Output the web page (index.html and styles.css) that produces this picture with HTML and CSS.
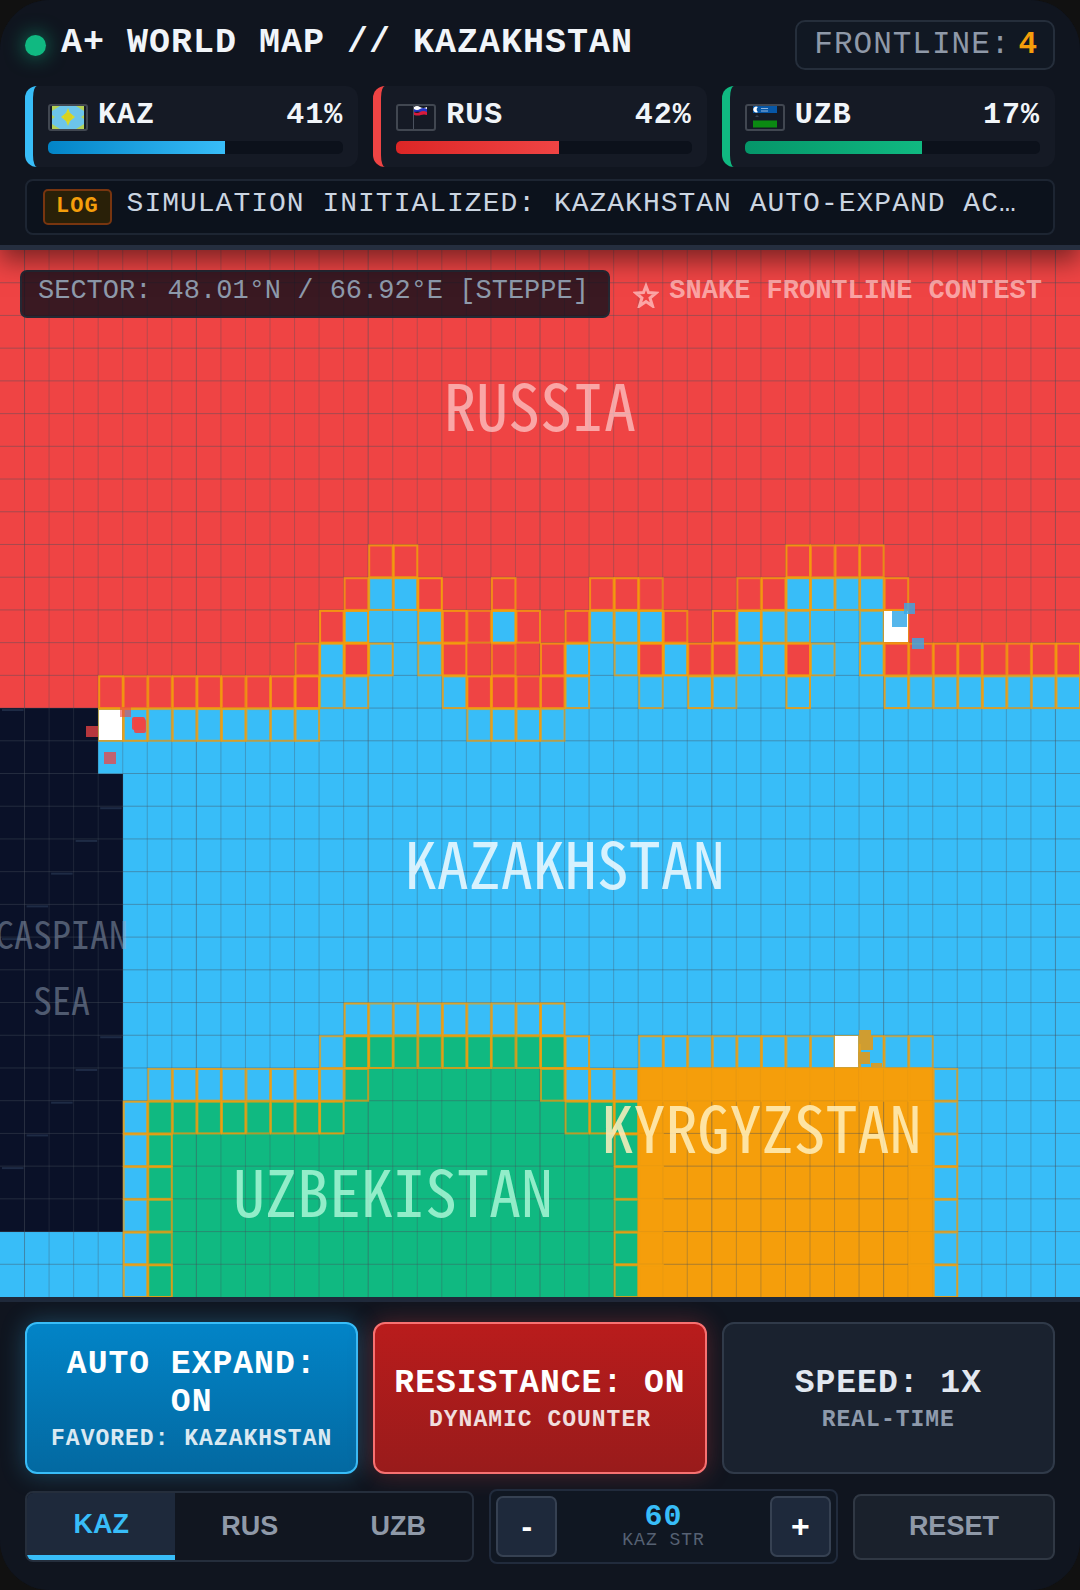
FILE: index.html
```html
<!DOCTYPE html>
<html lang="en">
<head>
<meta charset="utf-8">
<meta name="viewport" content="width=device-width, initial-scale=1">
<title>A+ World Map // Kazakhstan</title>
<link rel="stylesheet" href="styles.css">
</head>
<body>
<div class="app">
  <header class="header">
    <div class="title-row">
      <h1 class="title"><span class="status-dot"></span>A+ WORLD MAP // KAZAKHSTAN</h1>
      <div class="frontline">FRONTLINE:<b class="frontline-count">4</b></div>
    </div>
    <div class="stats">
      <section class="stat kaz">
        <div class="stat-head">
          <svg class="flag" viewBox="0 0 36 23" aria-hidden="true"><rect x="2" width="32" height="23" fill="#6cc5ea"/><path d="M18 2l2 5 5 4-5 4-2 5-2-5-5-4 5-4z" fill="#d6d82a"/><circle cx="18" cy="11" r="4" fill="#d9d21f"/><path d="M2 0h8l-8 5zM34 0h-8l8 5zM2 23h8l-8-5zM34 23h-8l8-5zM2 9l3 2-3 2zM34 9l-3 2 3 2z" fill="#b4d156"/></svg>
          <span>KAZ</span><span class="share">41%</span>
        </div>
        <div class="track"><div class="fill" style="width:60%"></div></div>
      </section>
      <section class="stat rus">
        <div class="stat-head">
          <svg class="flag" viewBox="0 0 36 23" aria-hidden="true"><path d="M15.500 0v23" stroke="#4a515e"/><path d="M16 1q3-2 6 0t7 0v3H16z" fill="#fff"/><path d="M16 3q3 2 6 0t7 0v3q-3 1-6 0t-7 0z" fill="#2336c4"/><path d="M16 6q3 2 6 0t7 0v3q-3-1-6 0t-7 0z" fill="#d81b3c"/></svg>
          <span>RUS</span><span class="share">42%</span>
        </div>
        <div class="track"><div class="fill" style="width:55%"></div></div>
      </section>
      <section class="stat uzb">
        <div class="stat-head">
          <svg class="flag" viewBox="0 0 36 23" aria-hidden="true"><path d="M6 0h24v7H6z" fill="#0757a6"/><path d="M11 1a3 3 0 1 0 0 5a3 3 0 0 1 0-5z" fill="#fff"/><path d="M14 2.500h7M14 5h7" stroke="#8fb4dc"/><path d="M8 11l2-2 2 2z" fill="#374151"/><path d="M6 14.500h24v7H6z" fill="#0b8a12"/></svg>
          <span>UZB</span><span class="share">17%</span>
        </div>
        <div class="track"><div class="fill" style="width:60%"></div></div>
      </section>
    </div>
    <div class="log">
      <span class="log-tag">LOG</span>
      <span class="log-text">SIMULATION INITIALIZED: KAZAKHSTAN AUTO-EXPAND ACTIVE ON ALL FRONTS</span>
    </div>
  </header>

  <main class="map">
    <svg class="terrain" viewBox="0 0 1080 1047" preserveAspectRatio="none" aria-hidden="true">
      <g id="cells" shape-rendering="crispEdges"></g>
      <g id="grid" class="grid"></g>
      <g id="waves" class="waves"></g>
      <g id="frontier" class="frontier"></g>
      <g class="heads">
        <rect x="99" y="460" width="23" height="30"/>
        <rect x="884" y="361" width="24" height="31"/>
        <rect x="835" y="786" width="23" height="31"/>
      </g>
      <g fill="#ef4444">
        <rect x="86" y="476" width="12" height="11" opacity=".75"/>
        <rect x="120" y="457" width="11" height="10" opacity=".6"/>
        <rect x="132" y="467" width="13" height="13" rx="2" opacity=".95"/>
        <rect x="134" y="469" width="12" height="14" rx="2" opacity=".9"/>
        <rect x="104" y="502" width="12" height="12" opacity=".75"/>
      </g>
      <g fill="#38a9e8">
        <rect x="904" y="353" width="11" height="11" opacity=".8"/>
        <rect x="892" y="361" width="15" height="16" opacity=".85"/>
        <rect x="912" y="388" width="12" height="11" opacity=".8"/>
      </g>
      <g fill="#cf9d31">
        <rect x="859" y="780" width="12" height="14"/>
        <rect x="861" y="786" width="12" height="14"/>
        <rect x="858" y="802" width="12" height="12"/>
        <rect x="871" y="813" width="11" height="5"/>
      </g>
    </svg>
    <span class="place russia">RUSSIA</span>
    <span class="place kazakhstan">KAZAKHSTAN</span>
    <span class="place kyrgyzstan">KYRGYZSTAN</span>
    <span class="place uzbekistan">UZBEKISTAN</span>
    <span class="place caspian">CASPIAN<br>SEA</span>
    <div class="hud">
      <div class="sector">SECTOR: 48.01°N / 66.92°E [STEPPE]</div>
      <div class="contest">
        <svg class="star" viewBox="0 0 26 26" aria-hidden="true"><path d="M13 4l2.500 6.500 7.500.5-6 5 2.500 8-6.500-4.500L6.500 24 9 16l-6-5 7.500-.5z" fill="none" stroke="currentColor" stroke-width="3"/></svg>
        SNAKE FRONTLINE CONTEST
      </div>
    </div>
  </main>

  <footer class="controls">
    <div class="actions">
      <button class="action expand" type="button">AUTO EXPAND: ON<small>FAVORED: KAZAKHSTAN</small></button>
      <button class="action resist" type="button">RESISTANCE: ON<small>DYNAMIC COUNTER</small></button>
      <button class="action speed" type="button">SPEED: 1X<small>REAL-TIME</small></button>
    </div>
    <div class="tools">
      <div class="tabs">
        <button class="tab active" type="button">KAZ</button>
        <button class="tab" type="button">RUS</button>
        <button class="tab" type="button">UZB</button>
      </div>
      <div class="stepper">
        <button class="step" type="button">-</button>
        <div class="strength"><b>60</b><span>KAZ STR</span></div>
        <button class="step" type="button">+</button>
      </div>
      <button class="reset" type="button">RESET</button>
    </div>
  </footer>
</div>
<script src="map.js"></script>
</body>
</html>
```
FILE: map.js
```js
// Territory runs per row: owner letter followed by the number of columns.
// R Russia, K Kazakhstan, U Uzbekistan, G Kyrgyzstan, W water
const rows = [];
const add = (count, runs) => {
  const line = runs.replace(/([A-Z])(\d+) ?/g, (_, owner, n) => owner.repeat(Number(n)));
  for (let i = 0; i < count; i++) rows.push(line);
};
add(10, 'R44');
add(1, 'R15 K2 R15 K4 R8');
add(1, 'R14 K4 R2 K1 R3 K3 R3 K6 R8');
add(1, 'R13 K1 R1 K3 R5 K3 R1 K1 R2 K2 R1 K3 R8');
add(1, 'R13 K6 R4 K21');
add(2, 'W4 K40');
add(8, 'W5 K39');
add(1, 'W5 K9 U9 K21');
add(1, 'W5 K9 U9 K3 G12 K6');
add(4, 'W5 K1 U20 G12 K6');
add(2, 'K6 U20 G12 K6');

const colors = { R: '#ef4444', K: '#38bdf8', U: '#10b981', G: '#f59e0b', W: '#0a1128' };
const COLS = 44, ROWS = rows.length;
const cw = 1080 / COLS, ch = 1047 / ROWS;
const make = (parent, tag, attrs) => {
  const el = document.createElementNS('http://www.w3.org/2000/svg', tag);
  for (const key in attrs) el.setAttribute(key, attrs[key]);
  document.getElementById(parent).appendChild(el);
};

rows.forEach((line, r) => {
  for (const run of line.matchAll(/(.)\1*/g)) {
    make('cells', 'rect', { x: run.index * cw, y: r * ch, width: run[0].length * cw, height: ch, fill: colors[run[1]] });
  }
  for (let c = 0; c < COLS; c++) {
    const owner = line[c];
    if (owner === 'W') {
      if ((c + r) % 7 === 0) make('waves', 'rect', { x: c * cw + 2, y: r * ch + 1, width: cw - 3, height: 2 });
      continue;
    }
    const near = [line[c - 1], line[c + 1], rows[r - 1]?.[c], rows[r + 1]?.[c]];
    const contested = near.filter(o => o && o !== 'W' && o !== owner).length;
    if (contested) {
      make('frontier', 'rect', { x: c * cw + 1, y: r * ch + 1, width: cw - 1, height: ch - 1, opacity: Math.min(0.55 + contested * 0.1 + ((c * 5 + r * 3) % 4) * 0.07, 1) });
    }
  }
});
for (let c = 1; c < COLS; c++) make('grid', 'path', { d: `M${c * cw} 0V1047`, opacity: c % 7 === 1 ? 1 : 0.65 });
for (let r = 1; r < ROWS; r++) make('grid', 'path', { d: `M0 ${r * ch}H1080`, opacity: 0.85 });
```
FILE: styles.css
```css
* { box-sizing: border-box; }

body {
  margin: 0;
  background: #111;
  color: #f1f5f9;
  font-family: "Liberation Mono", monospace;
}

button { font: inherit; color: inherit; margin: 0; padding: 0; cursor: pointer; }

.app {
  display: flex;
  flex-direction: column;
  min-height: 100vh;
  overflow: hidden;
  border-radius: 50px;
  background: #10151f;
}

.header {
  position: relative;
  z-index: 1;
  display: flex;
  flex-direction: column;
  padding: 20px 25px 10px;
  border-bottom: 5px solid #252e3f;
  background: #10151f;
  box-shadow: 0 10px 25px rgba(0, 0, 0, .5);
}

.title-row { display: flex; justify-content: space-between; margin-bottom: 16px; }

.title {
  display: flex;
  align-items: center;
  gap: 15px;
  height: 46px;
  margin: 0;
  font-size: 35px;
  letter-spacing: 1px;
}

.status-dot {
  width: 21px;
  height: 21px;
  margin-top: 4px;
  border-radius: 50%;
  background: #10b981;
  box-shadow: 0 0 20px rgba(16, 185, 129, .7);
}

.frontline {
  height: 50px;
  padding: 0 15px 0 17px;
  border: 2px solid #252e3b;
  border-radius: 10px;
  background: #111823;
  color: #8f99a8;
  font-size: 31px;
  line-height: 46px;
  letter-spacing: 1px;
}

.frontline-count { margin-left: 8px; color: #f59e0b; }

.stats { display: grid; grid-template-columns: repeat(3, 1fr); gap: 15px; margin-bottom: 12px; }

.stat {
  height: 81px;
  padding: 12px 15px;
  border-left: 8px solid var(--main);
  border-radius: 12px;
  background: #151a25;
}

.kaz { --main: #38bdf8; --deep: #0284c7; }
.rus { --main: #ef4444; --deep: #dc2626; }
.uzb { --main: #10b981; --deep: #059669; }

.stat-head {
  display: flex;
  align-items: center;
  gap: 10px;
  height: 34px;
  margin-bottom: 9px;
  font-size: 30px;
  font-weight: bold;
  line-height: 34px;
  letter-spacing: 1px;
}

.share { margin-left: auto; }

.flag {
  width: 40px;
  height: 27px;
  margin-top: 4px;
  border: 2px solid #414751;
  border-radius: 3px;
}

.track { height: 13px; overflow: hidden; border-radius: 5px; background: #0c111b; }
.fill { height: 100%; background: linear-gradient(90deg, var(--deep), var(--main)); }

.log {
  display: flex;
  align-items: center;
  gap: 15px;
  height: 56px;
  padding: 0 27px 0 16px;
  border: 2px solid #1d2532;
  border-radius: 8px;
  background: #0c121c;
}

.log-tag {
  padding: 0 11px;
  border: 2px solid #78350f;
  border-radius: 5px;
  background: #292008;
  color: #f59e0b;
  font-size: 22px;
  font-weight: bold;
  line-height: 32px;
  letter-spacing: 1px;
}

.log-text {
  overflow: hidden;
  height: 40px;
  color: #cbd5e1;
  font-size: 28px;
  line-height: 34px;
  letter-spacing: 1px;
  text-overflow: ellipsis;
  white-space: nowrap;
}

.map { position: relative; flex: 1; min-height: 600px; overflow: hidden; }
.terrain { position: absolute; inset: 0; width: 100%; height: 100%; }
.grid { fill: none; stroke: #47505c; stroke-opacity: .5; stroke-width: 1; }
.waves { fill: #1e2b45; }
.frontier { fill: none; stroke: #f59e0b; stroke-width: 2; }
.heads { fill: #fff; }

.place {
  position: absolute;
  transform: translate(-50%, -50%);
  color: rgba(255, 255, 255, .6);
  font-family: "Noto Sans Mono CJK JP", "Liberation Mono", monospace;
  font-size: 64px;
  line-height: 66px;
  text-align: center;
  white-space: nowrap;
}

.russia { left: 50%; top: 14.6%; color: rgba(255, 220, 220, .65); }
.kazakhstan { left: 52.3%; top: 58.4%; color: rgba(255, 255, 255, .8); }
.uzbekistan { left: 36.4%; top: 89.7%; color: rgba(190, 255, 225, .75); }
.kyrgyzstan { left: 70.5%; top: 83.6%; color: rgba(255, 240, 190, .85); }
.caspian { left: 5.7%; top: 68.4%; color: rgba(148, 163, 184, .5); font-size: 38px; }

.hud { position: relative; display: flex; align-items: flex-start; justify-content: space-between; padding: 20px 38px 0 20px; }

.sector {
  height: 48px;
  padding: 0 19px 0 16px;
  border: 2px solid #252833;
  border-radius: 7px;
  background: rgba(12, 15, 26, .8);
  color: #8e9aab;
  font-size: 27px;
  line-height: 38px;
}

.contest {
  display: flex;
  gap: 10px;
  height: 48px;
  color: rgba(255, 190, 190, .8);
  font-size: 27px;
  font-weight: bold;
  line-height: 42px;
}

.star { width: 26px; height: 26px; margin-top: 12px; }

.controls {
  display: flex;
  flex-direction: column;
  gap: 15px;
  padding: 20px 25px 26px;
  border-top: 5px solid #1f293a;
  background: #10151f;
}

.actions { display: grid; grid-template-columns: repeat(3, 1fr); gap: 15px; }

.action {
  display: flex;
  flex-direction: column;
  align-items: center;
  justify-content: center;
  min-height: 152px;
  padding: 5px 15px 0;
  border: 2px solid;
  border-radius: 12px;
  font-size: 33px;
  font-weight: bold;
  line-height: 38px;
  letter-spacing: 1px;
}

.action small { font-size: 23px; line-height: 34px; opacity: .85; white-space: nowrap; }

.expand {
  border-color: #38bdf8;
  background: linear-gradient(#0284c7, #0369a1);
  color: #fff;
  box-shadow: 0 0 25px rgba(56, 189, 248, .3);
}

.resist {
  border-color: #f87171;
  background: linear-gradient(#b91c1c, #991b1b);
  color: #fff;
  box-shadow: 0 0 25px rgba(239, 68, 68, .3);
}

.speed { border-color: #303a49; background: #1a222f; color: #e2e8f0; }
.action.speed small { color: #a3b0c2; }
.resist, .speed { padding: 5px 0 0; }

.tools { display: grid; grid-template-columns: 449fr 348fr 202fr; align-items: center; gap: 15px; }

.tabs, .reset { font-family: "Liberation Sans", sans-serif; font-size: 27px; font-weight: bold; color: #8f99a8; }

.tabs {
  display: grid;
  grid-template-columns: repeat(3, 1fr);
  height: 71px;
  overflow: hidden;
  border: 2px solid #252e3c;
  border-radius: 8px;
  background: #111620;
}

.tab { border: 0; background: none; }
.tab.active { border-bottom: 5px solid #38bdf8; background: #1e293b; color: #38bdf8; }

.stepper {
  display: flex;
  align-items: center;
  justify-content: space-between;
  height: 75px;
  padding: 0 5px;
  border: 2px solid #212b3c;
  border-radius: 8px;
  background: #101722;
}

.step {
  width: 61px;
  height: 61px;
  border: 2px solid #364152;
  border-radius: 7px;
  background: #1e293b;
  color: #fff;
  font-family: "Liberation Sans", sans-serif;
  font-size: 32px;
  font-weight: bold;
}

.strength { display: flex; flex-direction: column; align-items: center; letter-spacing: 1px; }
.strength b { color: #38bdf8; font-size: 30px; line-height: 26px; }
.strength span { color: #566173; font-size: 18px; line-height: 20px; }

.reset { height: 66px; border: 2px solid #303844; border-radius: 8px; background: #1a212c; }
```
